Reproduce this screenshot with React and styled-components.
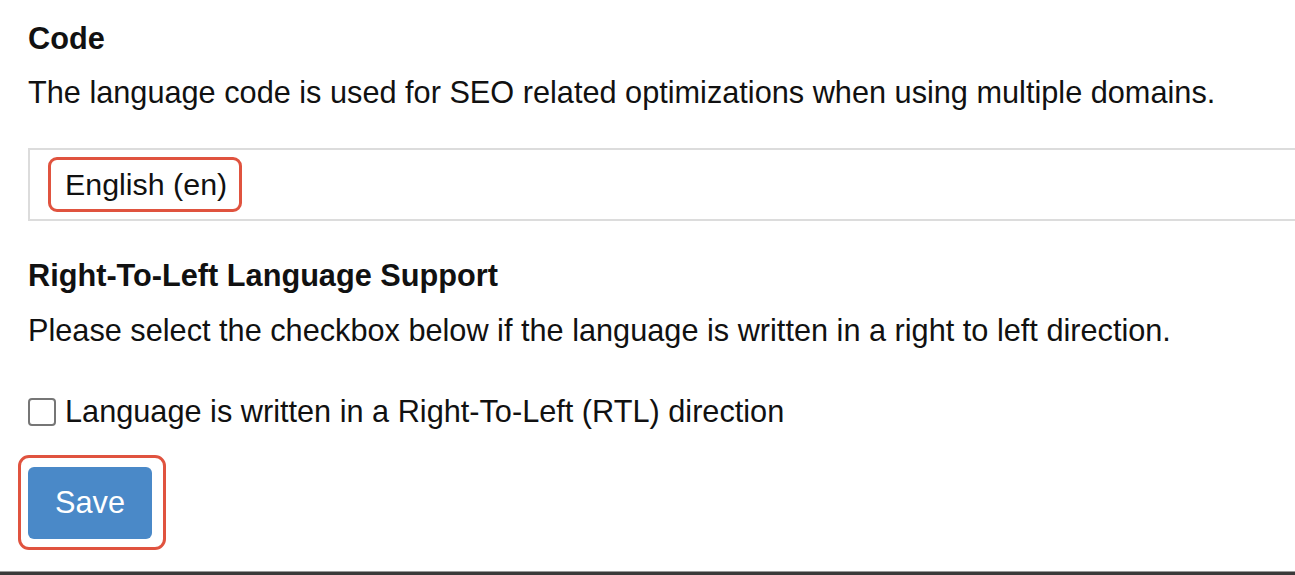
import React from "react";
import styled, { createGlobalStyle } from "styled-components";

const GlobalStyle = createGlobalStyle`
  html, body {
    margin: 0;
    padding: 0;
    background: #fff;
  }
  body {
    font-family: "Liberation Sans", Arial, sans-serif;
    color: #111;
    overflow: hidden;
  }
`;

const Page = styled.div`
  width: 1295px;
  height: 575px;
  box-sizing: border-box;
  display: flex;
  flex-direction: column;
  border-bottom: 3px solid #3a3a3a;
`;

const Form = styled.div`
  flex: 1;
  padding: 21px 0 0 28px;
  display: flex;
  flex-direction: column;
`;

const Heading = styled.h3`
  margin: 0;
  font-size: 30.7px;
  font-weight: bold;
  line-height: 36px;
  margin-top: ${(p) => p.top || 0}px;
`;

const Help = styled.p`
  margin: ${(p) => p.top || 19}px 0 0;
  font-size: 30.7px;
  line-height: 36px;
`;

const Input = styled.div`
  margin-top: 37px;
  height: 73px;
  box-sizing: border-box;
  border: 2px solid #dcdcdc;
  border-right: none;
  display: flex;
  align-items: center;
  padding-left: 18px;
`;

const Marked = styled.span`
  display: inline-flex;
  align-items: center;
  border: 3px solid #e0533f;
  border-radius: 9px;
  padding: 0 12px 0 14px;
  height: 55px;
  box-sizing: border-box;
  font-size: 30.4px;
`;

const CheckRow = styled.label`
  margin-top: 45px;
  display: flex;
  align-items: center;
  gap: 9px;
  font-size: 30.7px;
  line-height: 36px;
`;

const Box = styled.span`
  width: 28px;
  height: 28px;
  box-sizing: border-box;
  border: 2px solid #767676;
  border-radius: 4px;
  background: #fff;
`;

const SaveMark = styled.div`
  margin: 25px 0 0 -10px;
  align-self: flex-start;
  border: 3px solid #e0533f;
  border-radius: 11px;
  padding: 9px 11px 8px 7px;
`;

const Button = styled.button`
  width: 124px;
  height: 72px;
  border: none;
  border-radius: 6px;
  background: #4a89c8;
  color: #fff;
  font-family: "Liberation Sans", Arial, sans-serif;
  font-size: 30.7px;
  display: block;
`;

const Footer = styled.div`
  height: 1px;
  background: #999;
`;

export default function App() {
  return (
    <>
      <GlobalStyle />
      <Page>
        <Form>
          <Heading>Code</Heading>
          <Help top={18}>
            The language code is used for SEO related optimizations when using
            multiple domains.
          </Help>
          <Input>
            <Marked>English (en)</Marked>
          </Input>
          <Heading top={37}>Right-To-Left Language Support</Heading>
          <Help>
            Please select the checkbox below if the language is written in a
            right to left direction.
          </Help>
          <CheckRow>
            <Box />
            Language is written in a Right-To-Left (RTL) direction
          </CheckRow>
          <SaveMark>
            <Button>Save</Button>
          </SaveMark>
        </Form>
        <Footer />
      </Page>
    </>
  );
}
